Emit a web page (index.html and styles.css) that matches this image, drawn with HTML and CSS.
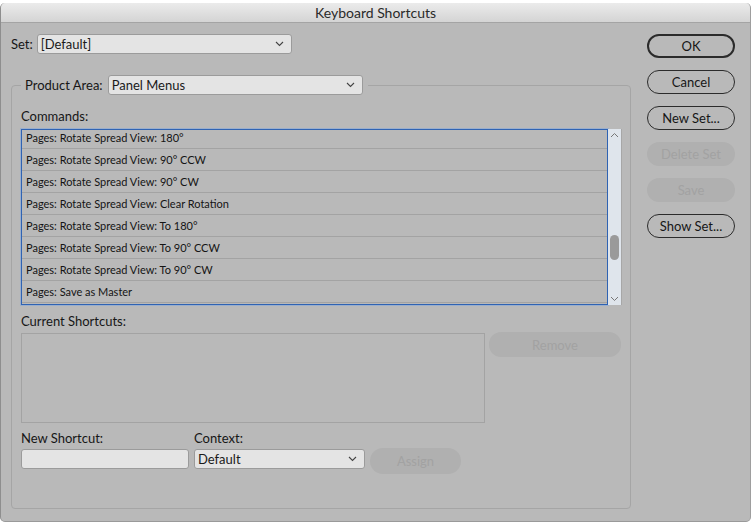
FILE: index.html
```html
<!DOCTYPE html>
<html lang="en">
<head>
    <meta charset="UTF-8">
    <title>Keyboard Shortcuts</title>
    <link rel="stylesheet" href="styles.css">
</head>
<body>

    <div class="dialog">
        <div class="titlebar">Keyboard Shortcuts</div>

        <div class="dialog-body">
            <div class="main">
                <!-- Set picker -->
                <div class="set-row">
                    <span class="label">Set:</span>
                    <div class="select select-set">
                        <span>[Default]</span>
                        <svg class="chev" width="9" height="6" viewBox="0 0 9 6"><polyline points="1,1 4.5,4.5 8,1" fill="none" stroke="#444" stroke-width="1.1"/></svg>
                    </div>
                </div>

                <fieldset class="group">
                    <legend class="area-legend">
                        <span class="label">Product Area:</span>
                        <div class="select select-area">
                            <span>Panel Menus</span>
                            <svg class="chev" width="9" height="6" viewBox="0 0 9 6"><polyline points="1,1 4.5,4.5 8,1" fill="none" stroke="#444" stroke-width="1.1"/></svg>
                        </div>
                    </legend>

                    <div class="label commands-label">Commands:</div>
                    <div class="commands">
                        <div class="list">
                            <div class="rows">
                                <div class="row">Pages: Rotate Spread View: 180°</div>
                                <div class="row">Pages: Rotate Spread View: 90° CCW</div>
                                <div class="row">Pages: Rotate Spread View: 90° CW</div>
                                <div class="row">Pages: Rotate Spread View: Clear Rotation</div>
                                <div class="row">Pages: Rotate Spread View: To 180°</div>
                                <div class="row">Pages: Rotate Spread View: To 90° CCW</div>
                                <div class="row">Pages: Rotate Spread View: To 90° CW</div>
                                <div class="row">Pages: Save as Master</div>
                            </div>
                        </div>
                        <div class="scrollbar">
                            <svg class="arrow" width="9" height="6" viewBox="0 0 9 6"><polyline points="1,5 4.5,1.5 8,5" fill="none" stroke="#777" stroke-width="1"/></svg>
                            <div class="track"><div class="thumb"></div></div>
                            <svg class="arrow" width="9" height="6" viewBox="0 0 9 6"><polyline points="1,1 4.5,4.5 8,1" fill="none" stroke="#777" stroke-width="1"/></svg>
                        </div>
                    </div>

                    <div class="label current-label">Current Shortcuts:</div>
                    <div class="current-row">
                        <div class="shortcut-box"></div>
                        <button class="btn disabled remove">Remove</button>
                    </div>

                    <div class="assign-row">
                        <div class="field">
                            <div class="label">New Shortcut:</div>
                            <div class="input new-input"></div>
                        </div>
                        <div class="field">
                            <div class="label">Context:</div>
                            <div class="select select-context">
                                <span>Default</span>
                                <svg class="chev" width="9" height="6" viewBox="0 0 9 6"><polyline points="1,1 4.5,4.5 8,1" fill="none" stroke="#444" stroke-width="1.1"/></svg>
                            </div>
                        </div>
                        <button class="btn disabled assign">Assign</button>
                    </div>
                </fieldset>
            </div>

            <!-- Dialog buttons -->
            <div class="side">
                <button class="btn default">OK</button>
                <button class="btn">Cancel</button>
                <button class="btn">New Set...</button>
                <button class="btn disabled">Delete Set</button>
                <button class="btn disabled">Save</button>
                <button class="btn">Show Set...</button>
            </div>
        </div>
    </div>

</body>
</html>
```

FILE: styles.css
```css
body {
    margin: 0;
    background-color: #fff;
    font-family: Lato, "Liberation Sans", sans-serif;
    color: #1c1c1c;
}
.dialog {
    margin-top: 3px;
    width: 751px;
    height: 519px;
    box-sizing: border-box;
    background-color: #b9b9b9;
    border-left: 1px solid #8e8e8e;
    border-right: 1px solid #9e9e9e;
    border-bottom: 1px solid #9a9a9a;
    border-radius: 5px;
    overflow: hidden;
}
.titlebar {
    height: 19px;
    line-height: 19px;
    text-align: center;
    font-size: 14px;
    color: #2a2a2a;
    background: linear-gradient(#ebebeb, #d4d4d4);
    border-bottom: 1px solid #a4a4a4;
}
.dialog-body {
    display: flex;
    padding: 11px 0 0 10px;
}
.main {
    width: 620px;
}
.label {
    font-size: 13px;
    line-height: 16px;
    color: #161616;
}
.set-row {
    display: flex;
    align-items: center;
    gap: 4px;
}
.select {
    display: flex;
    align-items: center;
    justify-content: space-between;
    box-sizing: border-box;
    height: 20px;
    padding: 0 7px 0 3px;
    background-color: #e4e4e4;
    border: 1px solid #9b9b9b;
    border-radius: 3px;
    font-size: 13px;
    color: #1a1a1a;
}
.select-set {
    width: 255px;
}
.select-area {
    width: 255px;
}
.select-context {
    width: 171px;
}
.group {
    margin: 21px 0 0 0;
    padding: 0 8px 34px 9px;
    border: 1px solid #a5a5a5;
    border-radius: 4px;
}
.area-legend {
    display: flex;
    align-items: center;
    gap: 5px;
    padding: 0 5px 0 4px;
}
.commands-label {
    margin-top: 13px;
    margin-bottom: 5px;
}
.commands {
    display: flex;
    height: 176px;
}
.list {
    flex: 1;
    border: 1px solid #2f63b3;
    box-shadow: 0 0 0 1px rgba(130, 165, 220, 0.55);
    overflow: hidden;
}
.rows {
    margin-top: -3px;
}
.row {
    height: 21px;
    line-height: 21px;
    padding-left: 4px;
    font-size: 11px;
    color: #141414;
    border-bottom: 1px solid #a3a3a3;
}
.scrollbar {
    width: 13px;
    display: flex;
    flex-direction: column;
    align-items: center;
    background-color: #dfe5ec;
    border-right: 1px solid #a7a7a7;
}
.scrollbar .arrow {
    margin: 3px 0;
}
.track {
    flex: 1;
    width: 100%;
}
.thumb {
    width: 9px;
    height: 25px;
    margin: 94px auto 0;
    background-color: #9a9a9a;
    border-radius: 5px;
}
.current-label {
    margin-top: 8px;
    margin-bottom: 4px;
}
.current-row {
    display: flex;
    align-items: flex-start;
    gap: 4px;
}
.shortcut-box {
    width: 464px;
    height: 90px;
    box-sizing: border-box;
    border: 1px solid #a3a3a3;
}
.assign-row {
    display: flex;
    align-items: flex-start;
    gap: 5px;
    margin-top: 7px;
}
.field .label {
    margin-bottom: 3px;
}
.input {
    box-sizing: border-box;
    height: 20px;
    background-color: #e4e4e4;
    border: 1px solid #9b9b9b;
    border-radius: 3px;
}
.new-input {
    width: 168px;
}
.side {
    display: flex;
    flex-direction: column;
    gap: 12px;
    margin-left: 16px;
}
.btn {
    box-sizing: border-box;
    width: 88px;
    height: 24px;
    padding: 0;
    background-color: transparent;
    border: 1px solid #2b2b2b;
    border-radius: 12px;
    font-family: Lato, "Liberation Sans", sans-serif;
    font-size: 13px;
    color: #161616;
}
.btn.default {
    border-width: 2px;
}
.btn.disabled {
    background-color: #b0b0b0;
    border: none;
    color: #a2a2a2;
}
.remove {
    width: 132px;
    height: 25px;
    margin-top: -1px;
}
.assign {
    width: 91px;
    height: 26px;
    margin-top: 18px;
    border-radius: 13px;
}
```
